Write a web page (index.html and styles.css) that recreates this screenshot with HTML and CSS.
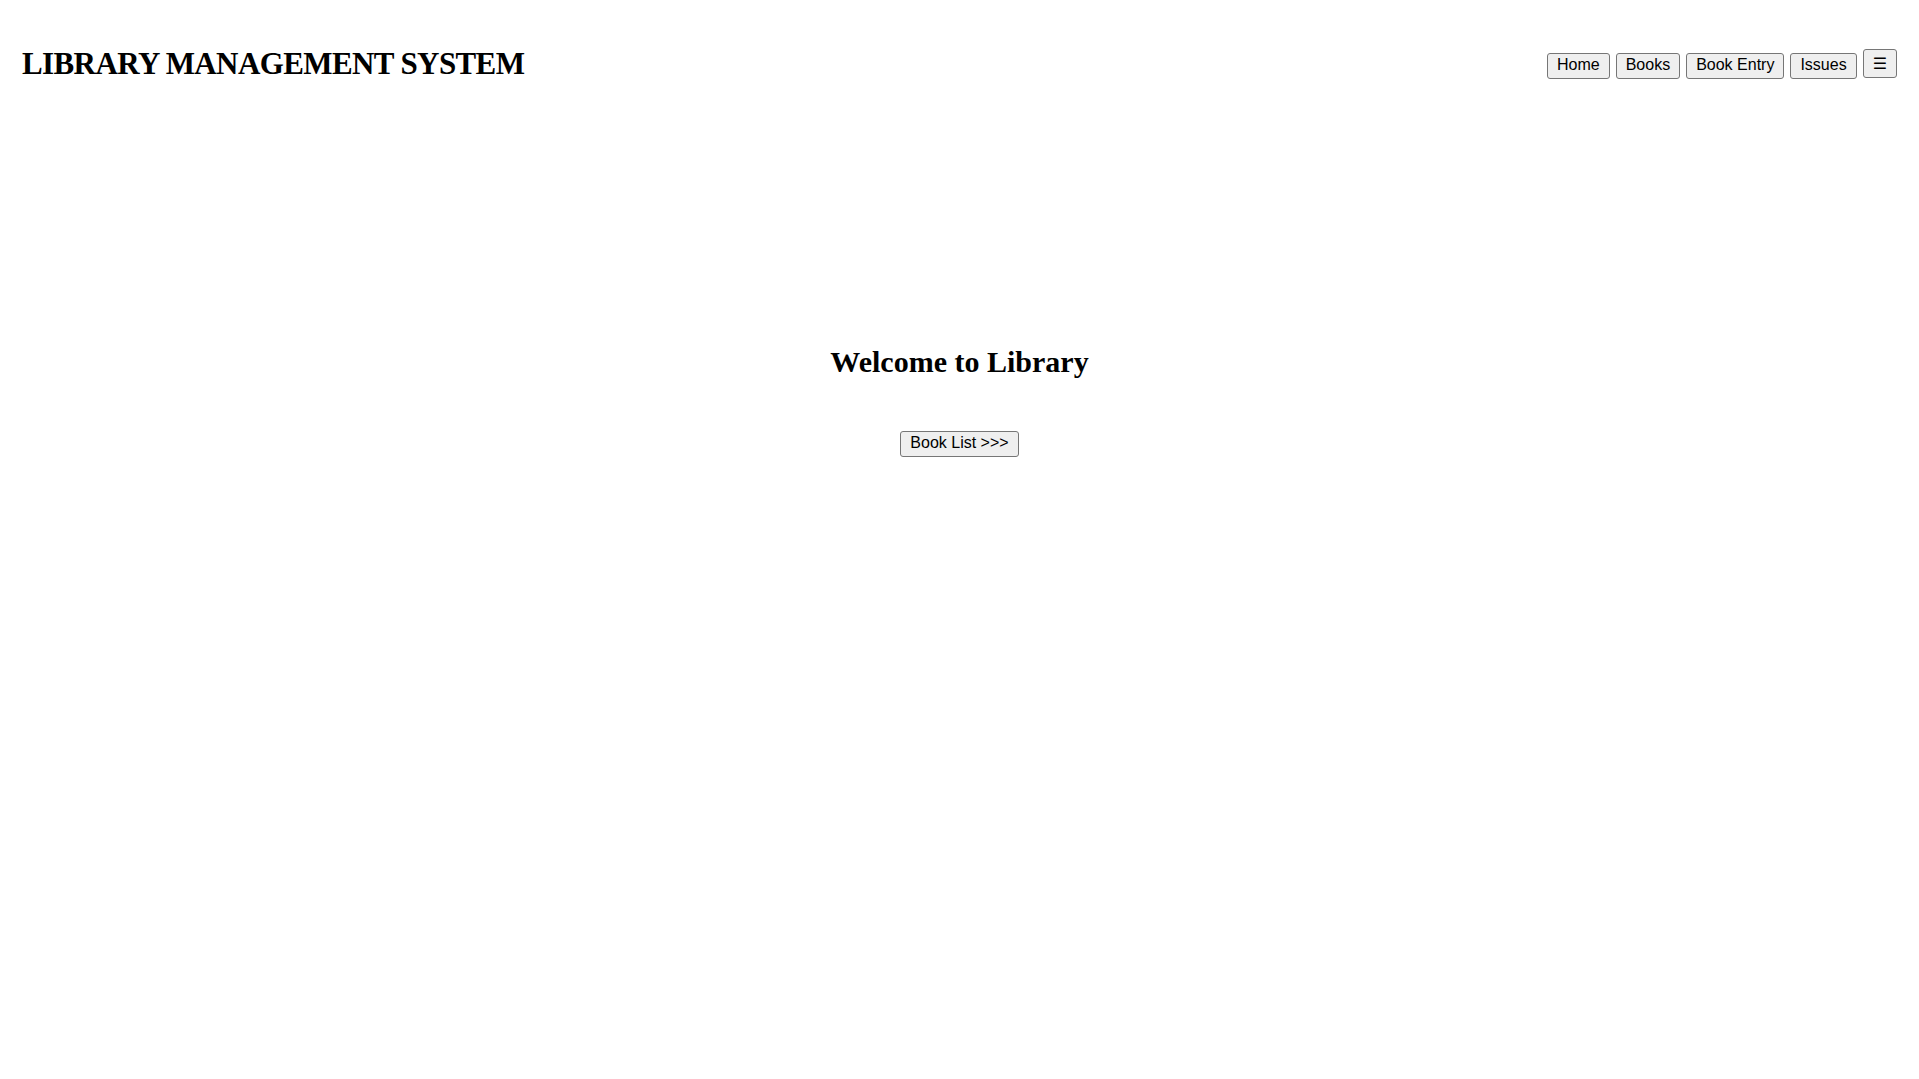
FILE: index.html
```html
<!DOCTYPE html>
<html>
<head>
<meta charset="utf-8">
<title>Library Management System</title>
<link rel="stylesheet" href="styles.css">
</head>
<body>
<header class="topbar">
  <h1 class="brand">LIBRARY MANAGEMENT SYSTEM</h1>
  <nav class="nav">
    <button class="btn">Home</button>
    <button class="btn">Books</button>
    <button class="btn">Book Entry</button>
    <button class="btn">Issues</button>
    <button class="btn btn-menu">☰</button>
  </nav>
</header>
<main class="hero">
  <h2 class="welcome">Welcome to Library</h2>
  <button class="btn">Book List &gt;&gt;&gt;</button>
</main>
</body>
</html>
```

FILE: styles.css
```css
html, body {
  margin: 0;
  padding: 0;
  background: #ffffff;
  color: #000000;
}

body {
  font-family: "Liberation Serif", "Times New Roman", serif;
}

.topbar {
  display: flex;
  justify-content: space-between;
  align-items: center;
  padding: 45px 22px 0 22px;
}

.brand {
  margin: 0;
  font-size: 31px;
  font-weight: bold;
  line-height: 38px;
  letter-spacing: -0.6px;
}

.nav {
  display: flex;
  align-items: flex-end;
  gap: 6px;
}

.btn {
  font-family: "Liberation Sans", Arial, sans-serif;
  font-size: 16px;
  line-height: 18px;
  padding: 2px 9px 4px 9px;
  margin: 0;
  background: #efefef;
  color: #000;
  border: 1px solid #767676;
  border-radius: 3px;
}

.btn-menu {
  font-family: "DejaVu Sans", sans-serif;
  font-size: 16px;
  line-height: 21px;
  padding: 3px 9px;
  margin-bottom: 1px;
}

.hero {
  display: flex;
  flex-direction: column;
  align-items: center;
  padding-top: 261px;
}

.welcome {
  margin: 0 0 52px 0;
  font-size: 30px;
  font-weight: bold;
  line-height: 35px;
}
```
